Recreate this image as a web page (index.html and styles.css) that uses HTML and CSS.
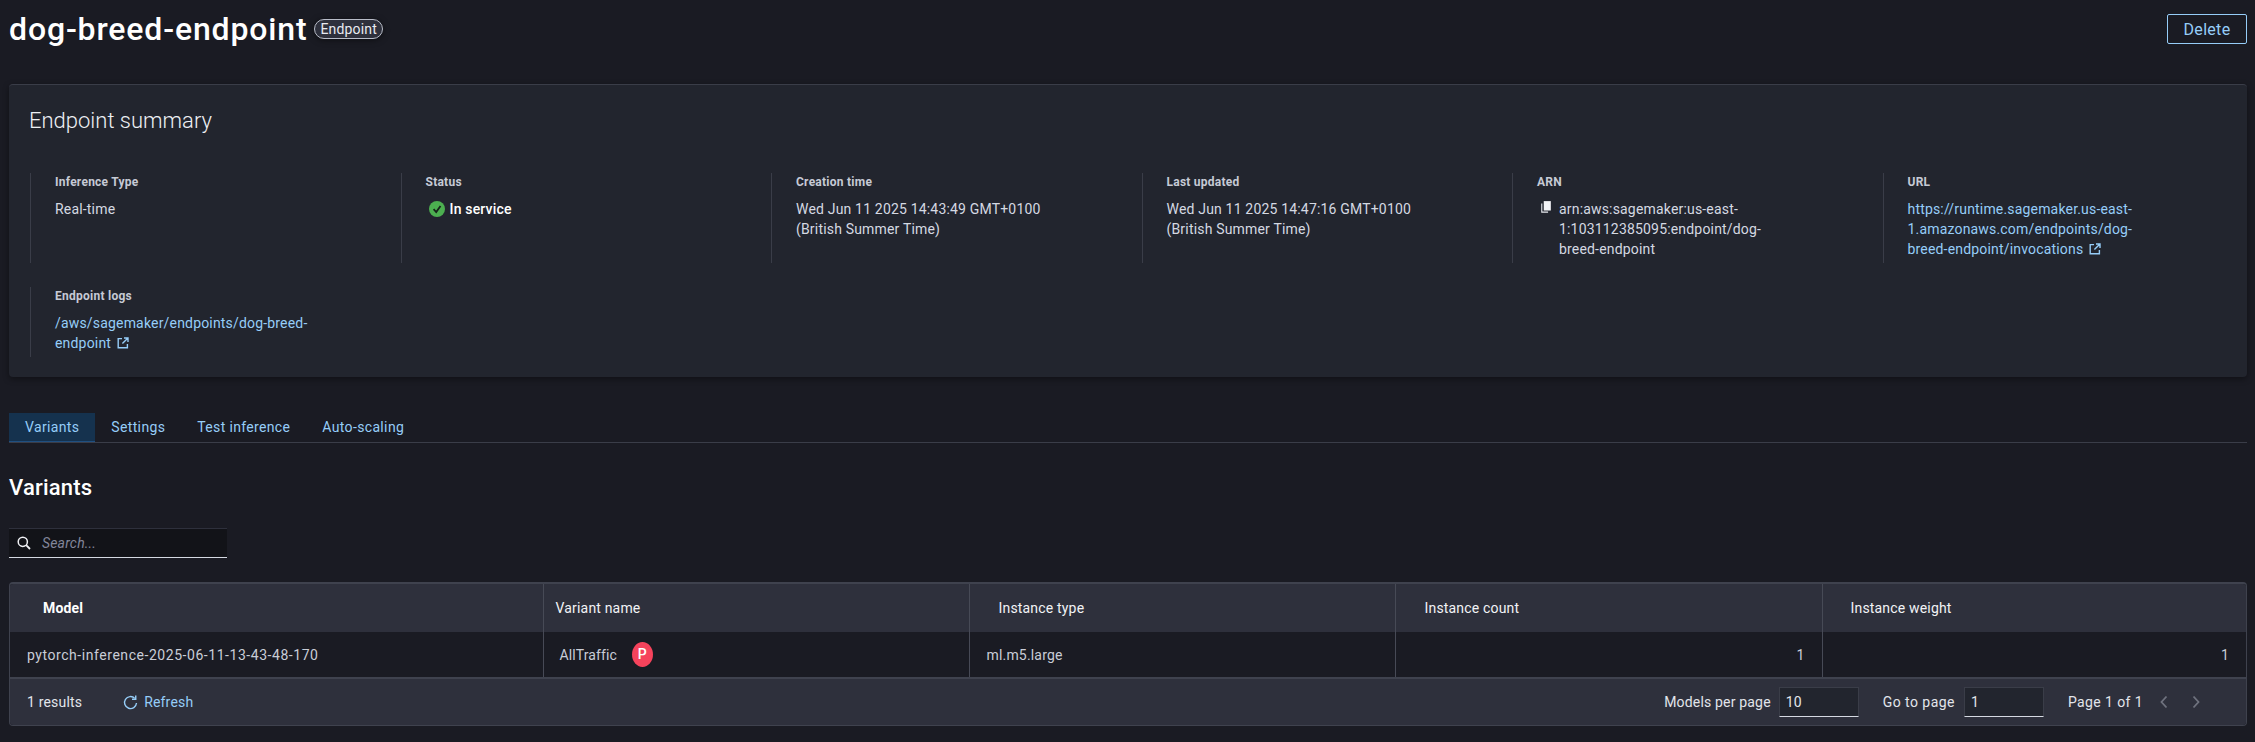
FILE: index.html
```html
<!DOCTYPE html>
<html lang="en">
<head>
    <meta charset="UTF-8">
    <meta name="viewport" content="width=device-width, initial-scale=1.0">
    <title>dog-breed-endpoint</title>
    <link rel="stylesheet" href="styles.css">
</head>
<body>
    <header class="page-head">
        <div class="title-wrap">
            <h1>dog-breed-endpoint</h1>
            <span class="type-badge">Endpoint</span>
        </div>
        <button type="button" class="delete-btn">Delete</button>
    </header>

    <section class="card">
        <h2>Endpoint summary</h2>
        <div class="details">
            <div class="detail">
                <div class="label">Inference Type</div>
                <div class="value">Real-time</div>
            </div>
            <div class="detail">
                <div class="label">Status</div>
                <div class="value status">
                    <svg class="icon-status" viewBox="0 0 16 16"><circle cx="8" cy="8" r="8" fill="#4caf50"/><path d="M4.6 8.2 7.2 11l4.3-6" fill="none" stroke="#16231a" stroke-width="1.8"/></svg>
                    In service
                </div>
            </div>
            <div class="detail">
                <div class="label">Creation time</div>
                <div class="value">Wed Jun 11 2025 14:43:49 GMT+0100<br>(British Summer Time)</div>
            </div>
            <div class="detail">
                <div class="label">Last updated</div>
                <div class="value">Wed Jun 11 2025 14:47:16 GMT+0100<br>(British Summer Time)</div>
            </div>
            <div class="detail">
                <div class="label">ARN</div>
                <div class="value arn">
                    <svg class="icon-copy" viewBox="0 0 14 16"><path d="M1 3.5V14.5H9" fill="none" stroke="#e8eaf0" stroke-width="1.4"/><rect x="3.5" y="0.5" width="9" height="12" fill="#f4f5f8"/></svg>
                    <span>arn:aws:sagemaker:us-east-<br>1:103112385095:endpoint/dog-<br>breed-endpoint</span>
                </div>
            </div>
            <div class="detail">
                <div class="label">URL</div>
                <div class="value"><a href="#">https://runtime.sagemaker.us-east-<br>1.amazonaws.com/endpoints/dog-<br>breed-endpoint/invocations <svg class="icon-ext" viewBox="0 0 12 12"><path d="M5 1.6H1.2V10.8H10.4V7M7 1H11V5M11 1 5.4 6.6" fill="none" stroke="currentColor" stroke-width="1.4"/></svg></a></div>
            </div>
            <div class="detail">
                <div class="label">Endpoint logs</div>
                <div class="value"><a href="#">/aws/sagemaker/endpoints/dog-breed-<br>endpoint <svg class="icon-ext" viewBox="0 0 12 12"><path d="M5 1.6H1.2V10.8H10.4V7M7 1H11V5M11 1 5.4 6.6" fill="none" stroke="currentColor" stroke-width="1.4"/></svg></a></div>
            </div>
        </div>
    </section>

    <nav class="tabs">
        <a href="#" class="tab active">Variants</a>
        <a href="#" class="tab">Settings</a>
        <a href="#" class="tab">Test inference</a>
        <a href="#" class="tab">Auto-scaling</a>
    </nav>

    <h3>Variants</h3>

    <div class="search">
        <svg class="icon-search" viewBox="0 0 14 14"><circle cx="5.8" cy="5.8" r="4.6" fill="none" stroke="#f0f1f5" stroke-width="1.5"/><path d="M9.2 9.2 13 13" stroke="#f0f1f5" stroke-width="1.8"/></svg>
        <span>Search...</span>
    </div>

    <div class="table-wrap">
        <table>
            <thead>
                <tr>
                    <th class="col-model">Model</th>
                    <th class="col-variant">Variant name</th>
                    <th class="col-type">Instance type</th>
                    <th class="col-count">Instance count</th>
                    <th class="col-weight">Instance weight</th>
                </tr>
            </thead>
            <tbody>
                <tr>
                    <td class="model-name">pytorch-inference-2025-06-11-13-43-48-170</td>
                    <td class="variant-cell"><span class="variant">AllTraffic <span class="prod-badge">P</span></span></td>
                    <td>ml.m5.large</td>
                    <td class="num">1</td>
                    <td class="num">1</td>
                </tr>
            </tbody>
        </table>
        <div class="table-foot">
            <span class="results">1 results</span>
            <a href="#" class="refresh">
                <svg class="icon-refresh" viewBox="0 0 16 16"><path d="M12.6 3.6A6.4 6.4 0 1 0 14.4 8.6" fill="none" stroke="currentColor" stroke-width="1.5"/><path d="M13.6 0.6V4.6H9.6" fill="none" stroke="currentColor" stroke-width="1.5"/></svg>
                Refresh
            </a>
            <div class="pager">
                <label>Models per page <span class="page-input">10</span></label>
                <label class="go-to">Go to page <span class="page-input">1</span></label>
                <span class="page-count">Page 1 of 1</span>
                <svg class="icon-chev" viewBox="0 0 8 14"><path d="M6.5 1.5 1.5 7l5 5.5" fill="none" stroke="currentColor" stroke-width="1.8"/></svg>
                <svg class="icon-chev" viewBox="0 0 8 14"><path d="M1.5 1.5 6.5 7l-5 5.5" fill="none" stroke="currentColor" stroke-width="1.8"/></svg>
            </div>
        </div>
    </div>
</body>
</html>
```
FILE: styles.css
```css
html, body {
    height: 100%;
}
body {
    font-family: Roboto, "Open Sans", sans-serif;
    font-size: 14px;
    line-height: 20px;
    letter-spacing: 0.18px;
    margin: 0;
    padding: 0 8px 0 9px;
    background: #1a1b23;
    color: #d5d9e2;
    overflow: hidden;
}
a {
    color: #96cdf8;
    text-decoration: none;
}
.page-head {
    height: 58px;
    display: flex;
    align-items: center;
    justify-content: space-between;
    margin-bottom: 26px;
}
.title-wrap {
    display: flex;
    align-items: center;
    gap: 7px;
}
h1 {
    margin: 0;
    font-size: 32px;
    line-height: 40px;
    font-weight: 500;
    letter-spacing: 0.85px;
    color: #fff;
}
.type-badge {
    border: 1px solid #b8bcc8;
    border-radius: 10px;
    background: #2e303c;
    color: #e8eaf0;
    height: 20px;
    box-sizing: border-box;
    padding: 0 5px;
    font-size: 14px;
    line-height: 18px;
    box-shadow: 0 1px 6px rgba(0, 0, 0, 0.5);
}
.delete-btn {
    width: 80px;
    height: 30px;
    background: none;
    border: 1px solid #96cdf8;
    border-radius: 2px;
    color: #96cdf8;
    font-family: inherit;
    font-size: 16px;
    letter-spacing: 0.3px;
}
.card {
    height: 293px;
    box-sizing: border-box;
    border-top: 1px solid #3a3d48;
    border-radius: 4px;
    background: #22252e;
    padding: 23px 0 0 21px;
    box-shadow: 0 2px 6px rgba(0, 0, 0, 0.4);
}
h2 {
    margin: 0 0 39px -1px;
    font-size: 22px;
    line-height: 26px;
    font-weight: 300;
    letter-spacing: 0;
    color: #eef0f4;
}
.details {
    display: grid;
    grid-template-columns: repeat(6, 370.5px);
    row-gap: 24px;
}
.detail {
    border-left: 1px solid #3a3d48;
    padding: 0 0 4px 24px;
}
.label {
    font-size: 12px;
    line-height: 18px;
    font-weight: 700;
    letter-spacing: 0.25px;
    color: #c6cad5;
    margin-bottom: 8px;
}
.status {
    display: flex;
    align-items: center;
    gap: 5px;
    font-weight: 500;
    color: #fff;
    padding-left: 3px;
}
.icon-status {
    width: 16px;
    height: 16px;
}
.arn {
    display: flex;
    gap: 7px;
    padding-left: 4px;
}
.icon-copy {
    width: 11px;
    height: 14px;
    margin-top: 1px;
    flex: none;
}
.icon-ext {
    width: 12px;
    height: 12px;
    margin-left: 2px;
    vertical-align: -1px;
}
.tabs {
    display: flex;
    margin-top: 36px;
    border-bottom: 1px solid #3a3d48;
}
.tab {
    padding: 4px 16px;
    height: 20px;
    line-height: 20px;
    letter-spacing: 0.35px;
    border-bottom: 1px solid transparent;
}
.tab.active {
    background: #15324e;
    border-bottom: 1px solid #1f4f80;
}
h3 {
    margin: 32px 0 27px;
    font-size: 22px;
    line-height: 26px;
    font-weight: 500;
    color: #fff;
}
.search {
    width: 218px;
    height: 30px;
    box-sizing: border-box;
    background: #121318;
    border-top: 1px solid #2e303c;
    border-bottom: 1px solid #d5d9e2;
    display: flex;
    align-items: center;
    gap: 11px;
    padding-left: 8px;
    font-style: italic;
    color: #82869a;
}
.icon-search {
    width: 14px;
    height: 14px;
}
.table-wrap {
    margin-top: 24px;
    border: 1px solid #3f424e;
    border-top-width: 2px;
    border-radius: 4px;
    box-sizing: border-box;
    height: 144px;
    overflow: hidden;
}
table {
    width: 100%;
    border-collapse: collapse;
    table-layout: fixed;
}
th {
    box-sizing: border-box;
    background: #2e303c;
    height: 48px;
    padding: 0;
    text-align: left;
    font-weight: 400;
    color: #f2f3f6;
    border-left: 1px solid #474a56;
}
th:first-child, td:first-child {
    border-left: none;
}
.col-model {
    width: 533px;
    padding-left: 33px;
    font-weight: 700;
    color: #fff;
}
.col-variant {
    width: 426px;
    padding-left: 12px;
}
.col-type {
    width: 426px;
    padding-left: 29px;
}
.col-count {
    width: 427px;
    padding-left: 29px;
}
.col-weight {
    padding-left: 28px;
}
td {
    height: 45px;
    padding: 0 17px;
    border-left: 1px solid #474a56;
    border-bottom: 2px solid #3f424e;
    color: #c9cdd7;
}
td.model-name {
    padding-left: 17px;
    letter-spacing: 0.55px;
}
td.variant-cell {
    padding-left: 16px;
    letter-spacing: 0.1px;
}
.num {
    text-align: right;
}
.variant {
    display: flex;
    align-items: center;
    gap: 15px;
}
.prod-badge {
    width: 21px;
    height: 25px;
    border-radius: 50%;
    background: #f6435c;
    color: #fff;
    font-weight: 500;
    text-align: center;
    line-height: 25px;
}
.table-foot {
    height: 46px;
    background: #2e303c;
    display: flex;
    align-items: center;
    padding: 0 22px 0 17px;
    color: #e2e5eb;
}
.refresh {
    display: flex;
    align-items: center;
    gap: 6px;
    margin-left: 41px;
}
.icon-refresh {
    width: 15px;
    height: 15px;
}
.pager {
    margin-left: auto;
    display: flex;
    align-items: center;
}
.pager label {
    display: flex;
    align-items: center;
    gap: 8px;
    margin-right: 24px;
}
.pager .go-to {
    gap: 9px;
    letter-spacing: 0.45px;
}
.page-input {
    width: 80px;
    height: 30px;
    box-sizing: border-box;
    background: #22252e;
    border: 1px solid #3a3d48;
    border-bottom-color: #d5d9e2;
    padding: 4px 6px;
}
.page-count {
    margin-right: 17px;
    letter-spacing: 0.4px;
}
.icon-chev {
    width: 8px;
    height: 14px;
    color: #6f727e;
    margin-right: 24px;
}
```
